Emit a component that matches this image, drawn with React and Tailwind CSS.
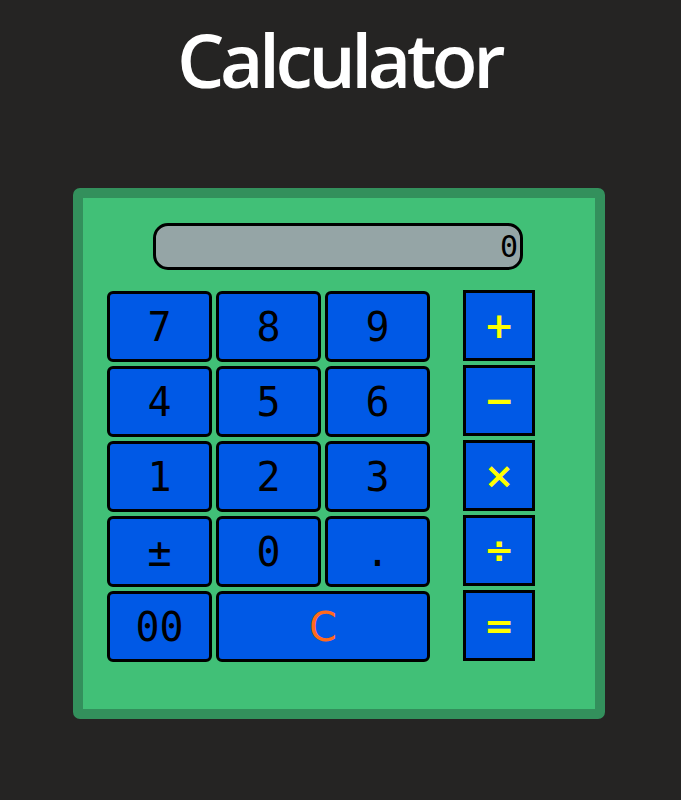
import React from "react";

const nums = ["7", "8", "9", "4", "5", "6", "1", "2", "3", "±", "0", "."];
const ops = ["+", "−", "×", "÷", "="];

export default function App() {
  return (
    <div className="min-h-[800px] w-full bg-[#252423] flex flex-col">
      <h1 className="mt-[14px] self-center pr-[3px] text-white text-[75px] leading-[90px] font-semibold tracking-[-4.5px] font-['Open_Sans',sans-serif]">
        Calculator
      </h1>
      <div className="mt-[84px] ml-[73px] w-[532px] h-[531px] border-[10px] border-[#33905c] rounded-[7px] bg-[#41c077] flex flex-col">
        <div className="mt-[25px] ml-[70px] w-[370px] h-[47px] rounded-[15px] border-[3px] border-black bg-[#95a5a6] flex items-center justify-end pr-[2px] font-['DejaVu_Sans_Mono',monospace] text-[30px] text-black">
          0
        </div>
        <div className="mt-[21px] flex items-start">
          <div className="ml-[24px] grid grid-cols-[105px_105px_105px] auto-rows-[71px] gap-[4px] font-['DejaVu_Sans_Mono',monospace] text-[40px] text-black">
            {nums.map((n) => (
              <div
                key={n}
                className="rounded-[6px] border-[3px] border-black bg-[#0059e6] flex items-center justify-center"
              >
                {n}
              </div>
            ))}
            <div className="rounded-[6px] border-[3px] border-black bg-[#0059e6] flex items-center justify-center">
              00
            </div>
            <div className="col-span-2 rounded-[6px] border-[3px] border-black bg-[#0059e6] flex items-center justify-center text-[#ff6a1c] font-['DejaVu_Sans',sans-serif]">
              C
            </div>
          </div>
          <div className="ml-[33px] -mt-[1px] flex flex-col gap-[4px] font-['DejaVu_Sans',sans-serif] font-bold text-[36px] text-[#ffff00]">
            {ops.map((o) => (
              <div
                key={o}
                className="w-[72px] h-[71px] border-[3px] border-black bg-[#0059e6] flex items-center justify-center"
              >
                {o}
              </div>
            ))}
          </div>
        </div>
      </div>
    </div>
  );
}
